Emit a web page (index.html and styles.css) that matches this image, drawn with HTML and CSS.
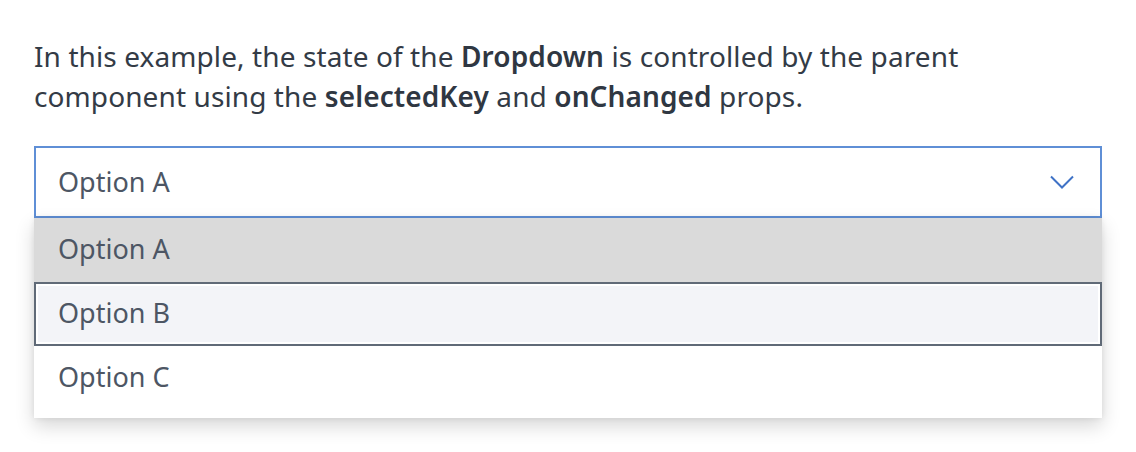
FILE: index.html
```html
<!DOCTYPE html>
<html>
<head>
<meta charset="utf-8">
<link rel="stylesheet" href="styles.css">
</head>
<body>
<div class="page">
  <p class="intro">In this example, the state of the <strong>Dropdown</strong> is controlled by the parent component using the <strong>selectedKey</strong> and <strong>onChanged</strong> props.</p>
  <div class="dropdown">
    <div class="title">
      <span class="title-text">Option A</span>
      <svg class="chevron" width="24" height="14" viewBox="0 0 24 14"><path d="M1 1.5 L12 12.5 L23 1.5" fill="none" stroke="#3f72c6" stroke-width="2"/></svg>
    </div>
    <div class="menu">
      <div class="item selected">Option A</div>
      <div class="item focused">Option B</div>
      <div class="item">Option C</div>
    </div>
  </div>
</div>
</body>
</html>
```
FILE: styles.css
```css
html, body {
  margin: 0;
  padding: 0;
  background: #ffffff;
}
.page {
  box-sizing: border-box;
  min-height: 452px;
  padding: 36px 34px 0 34px;
  font-family: "Noto Sans", "Open Sans", sans-serif;
}
.intro {
  margin: 0 0 30px 0;
  font-size: 28px;
  line-height: 40px;
  letter-spacing: 0.1px;
  color: #333b46;
  width: 1000px;
}
.intro strong {
  font-weight: 600;
  color: #2f3742;
}
.dropdown {
  width: 1068px;
}
.title {
  box-sizing: border-box;
  height: 72px;
  border: 2px solid #5f8fd6;
  display: flex;
  align-items: center;
  justify-content: space-between;
  padding: 0 26px 2px 22px;
  font-size: 27px;
  color: #4d5664;
}
.chevron {
  display: block;
  margin-top: 2px;
}
.menu {
  position: relative;
  background: #fff;
  padding-bottom: 8px;
  box-shadow: 0 8px 18px rgba(0,0,0,0.16), 0 0 6px rgba(0,0,0,0.08);
}
.item {
  box-sizing: border-box;
  height: 64px;
  display: flex;
  align-items: center;
  padding-left: 24px;
  padding-bottom: 4px;
  font-size: 27px;
  color: #4d5664;
}
.item.selected {
  background: #dadada;
}
.item.focused {
  background: #f3f4f8;
  border: 2px solid #606a77;
  box-shadow: inset 0 0 0 2px #ffffff;
  padding-left: 22px;
}
```
